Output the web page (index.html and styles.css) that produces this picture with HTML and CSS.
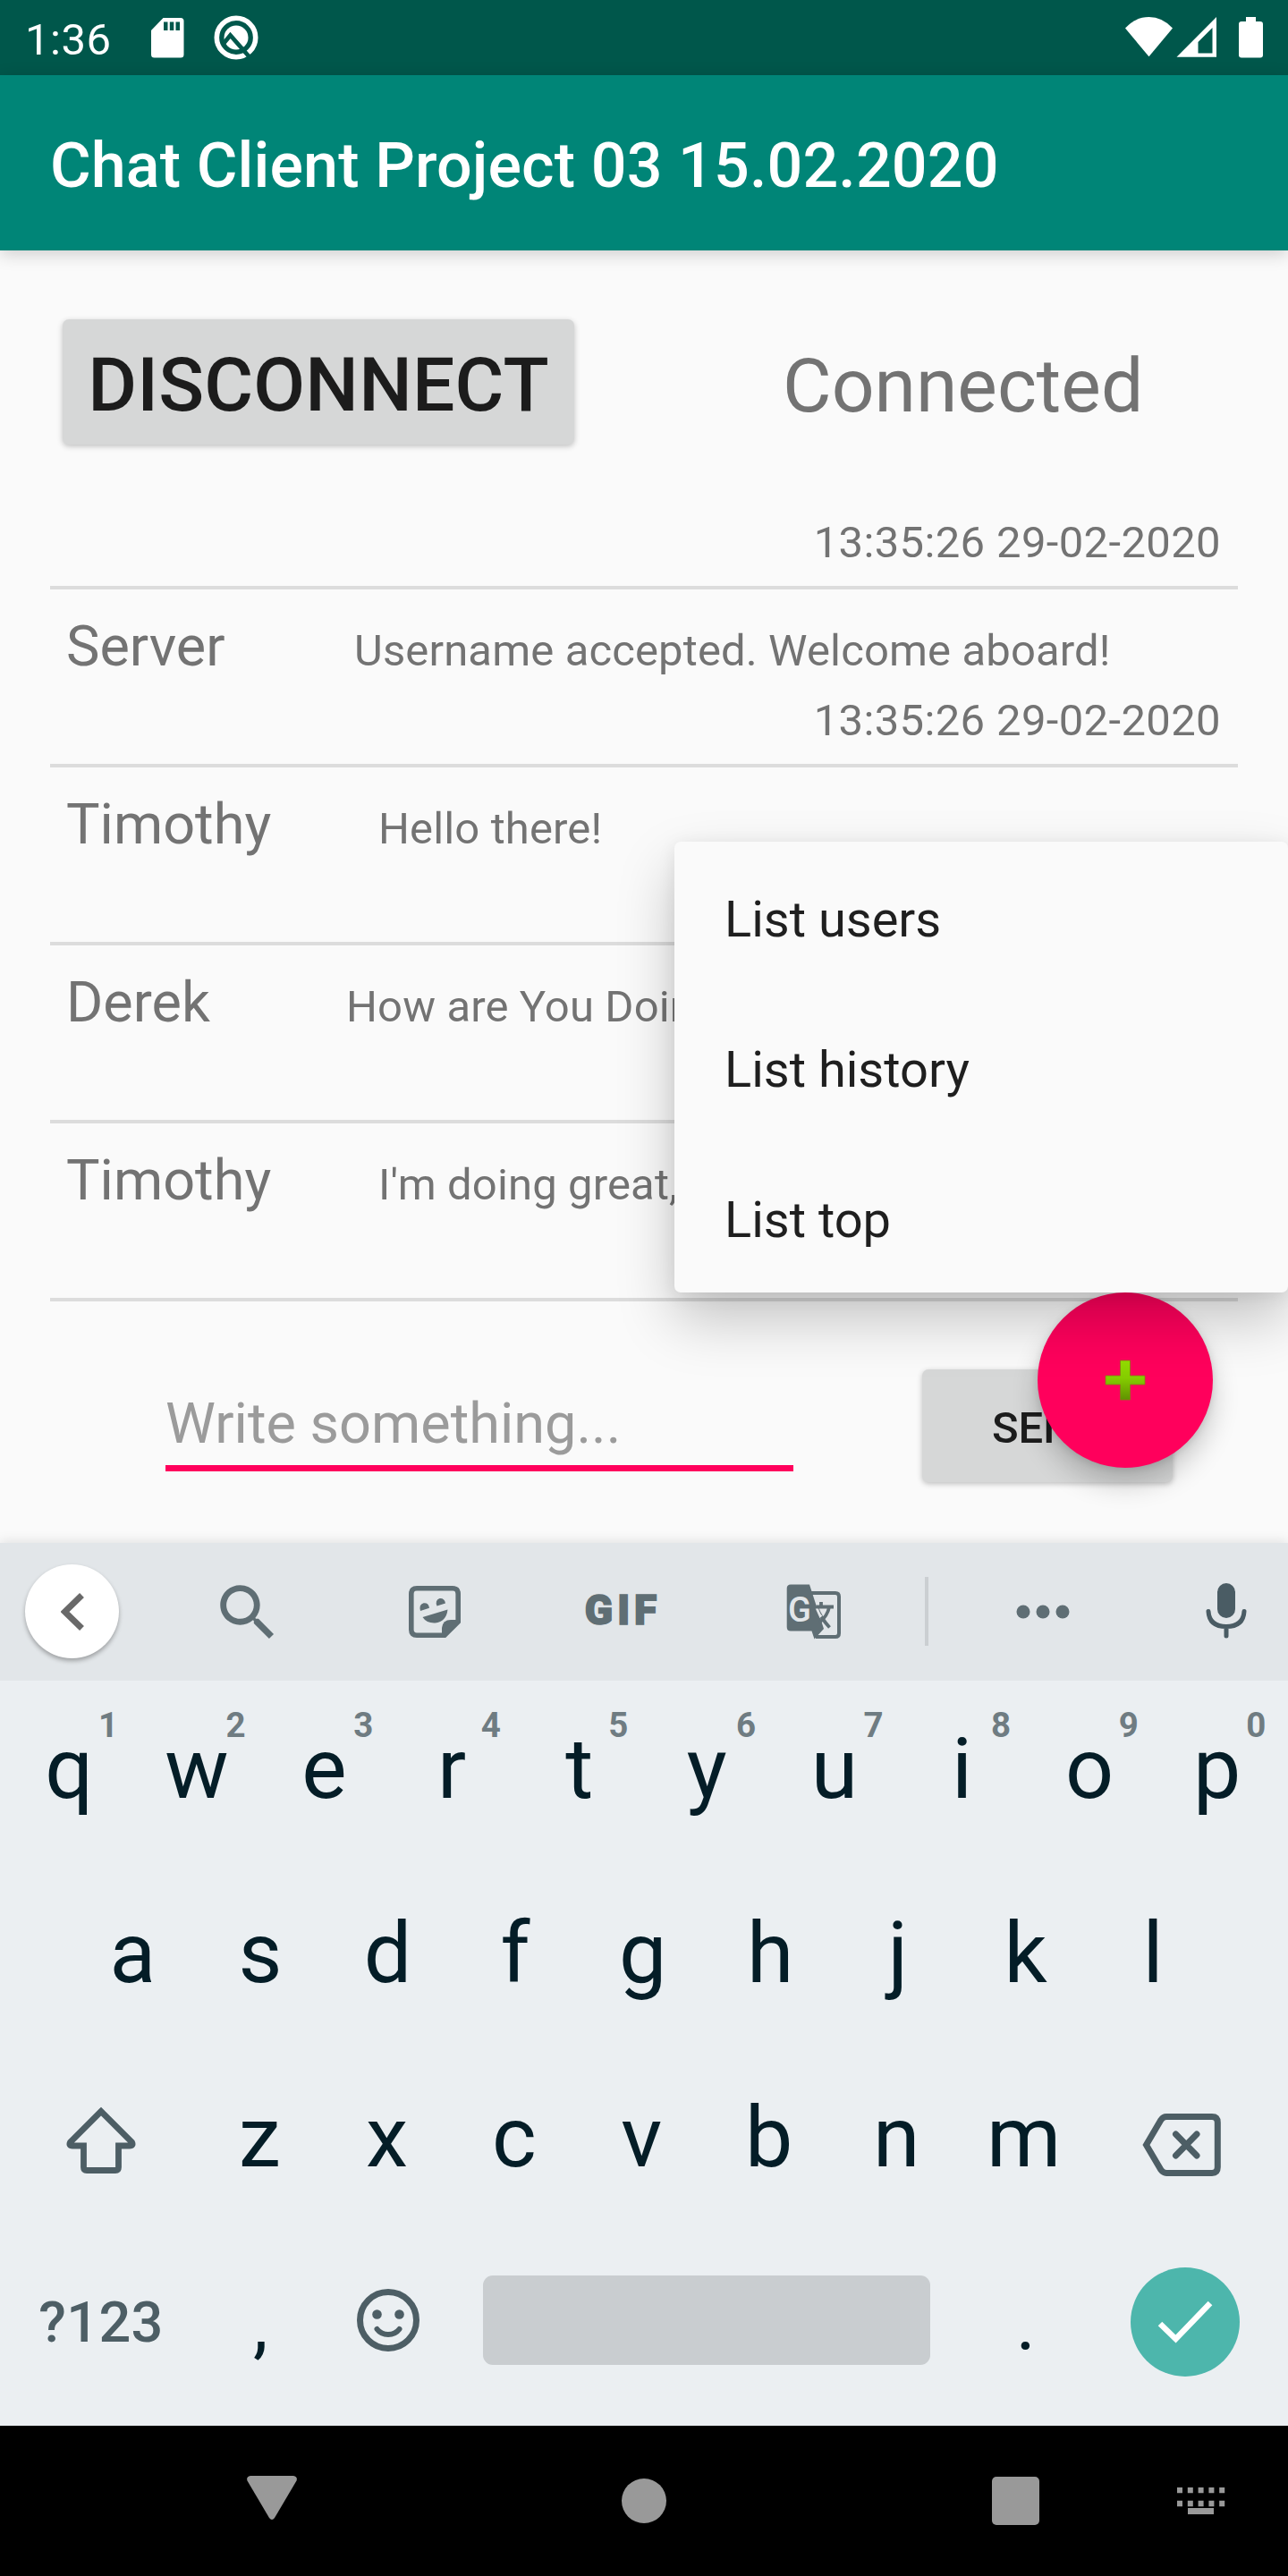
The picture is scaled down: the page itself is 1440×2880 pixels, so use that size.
FILE: index.html
```html
<!DOCTYPE html>
<html lang="en">
<head>
<meta charset="utf-8">
<title>Chat Client</title>
<link rel="stylesheet" href="styles.css">
</head>
<body>
<div class="screen">
  <div class="status">
    <span class="clock">1:36</span>
    <svg class="sd" width="37" height="45" viewBox="0 0 37 45"><path fill="#fff" fill-rule="evenodd" d="M13.500 0H33Q36.500 0 36.500 3.500V41Q36.500 44.500 33 44.500H3.500Q0 44.500 0 41V14ZM14 4.500V14H18.500V4.500ZM20.800 4.500V14H25.300V4.500ZM27.500 4.500V14H32V4.500Z"/></svg>
    <svg class="q" width="50" height="50" viewBox="0 0 50 50"><circle cx="25" cy="25" r="21.700" fill="none" stroke="#fff" stroke-width="5.600"/><circle cx="25" cy="25" r="13.500" fill="#fff"/><path d="M9.500 33.500L18.500 22.500L41 48" fill="none" stroke="#00574b" stroke-width="4.800"/></svg>
    <span class="grow"></span>
    <svg width="154" height="46" viewBox="0 0 154 46"><path fill="#fff" d="M0 12.500Q11.500 0 26.500 0T53 12.500L26.500 44.300Z"/><path fill="#fff" fill-rule="evenodd" d="M57.500 44.700L102 0V44.700ZM81.500 28V40.500H97.500V12Z"/><path fill="#fff" d="M135 0H146V5H151Q154 5 154 8V42.500Q154 45.500 151 45.500H130Q127 45.500 127 42.500V8Q127 5 130 5H135Z"/></svg>
  </div>
  <header class="appbar">Chat Client Project 03 15.02.2020</header>
  <main class="chat">
    <div class="connection">
      <button class="btn btn-connect">DISCONNECT</button>
      <span class="state">Connected</span>
    </div>
    <div class="messages">
      <div class="row row-first"><div class="time">13:35:26 29-02-2020</div></div>
      <div class="row"><div class="line"><span class="name">Server</span><span class="text from-server">Username accepted. Welcome aboard!</span></div><div class="time">13:35:26 29-02-2020</div></div>
      <div class="row"><div class="line"><span class="name">Timothy</span><span class="text from-timothy">Hello there!</span></div></div>
      <div class="row"><div class="line"><span class="name">Derek</span><span class="text from-derek">How are You Doing?</span></div></div>
      <div class="row"><div class="line"><span class="name">Timothy</span><span class="text from-timothy">I'm doing great, </span></div></div>
    </div>
    <div class="compose">
      <div class="field">Write something...</div>
      <button class="btn btn-send">SEND</button>
    </div>
    <div class="fab"><svg width="46" height="46" viewBox="0 0 46 46"><defs><linearGradient id="g" x1="0" y1="0" x2="0" y2="1"><stop offset="0" stop-color="#94de00"/><stop offset=".45" stop-color="#85cc00"/><stop offset="1" stop-color="#609200"/></linearGradient></defs><path fill="url(#g)" stroke="#8b7a18" stroke-width=".8" d="M17.500 1H28.500V18H45V28H28.500V45H17.500V28H1V18H17.500Z"/></svg></div>
    <div class="menu"><div>List users</div><div>List history</div><div>List top</div></div>
  </main>
  <section class="keyboard">
    <div class="tools">
      <span class="tool"><span class="back"><svg width="26" height="42" viewBox="0 0 26 42"><path d="M23.500 2.500L4.500 21L23.500 39.500" fill="none" stroke="#696969" stroke-width="7"/></svg></span></span>
      <span class="tool"><svg class="search" width="82" height="82" viewBox="0 0 24 24"><path fill="#5f6e74" d="M15.500 14h-.79l-.28-.27C15.410 12.590 16 11.110 16 9.500 16 5.910 13.090 3 9.500 3S3 5.910 3 9.500 5.910 16 9.500 16c1.610 0 3.090-.59 4.230-1.570l.27.28v.79l5 4.990L20.490 19l-4.990-5zm-6 0C7.010 14 5 11.990 5 9.500S7.010 5 9.500 5 14 7.010 14 9.500 11.990 14 9.500 14z"/></svg></span>
      <span class="tool"><svg width="58" height="58" viewBox="0 0 58 58" fill="#5f6e74"><path d="M9 2.800H49Q55.200 2.800 55.200 9V40L40 55.200H9Q2.800 55.200 2.800 49V9Q2.800 2.800 9 2.800Z" fill="none" stroke="#5f6e74" stroke-width="5.600"/><path d="M58 38V40L40.500 58H37V47Q38 38 47 38Z"/><path d="M15.500 35L43.500 26.500Q42 40 29.500 41.500Q20 42 15.500 35ZM13 28Q11 21 16.500 19.300Q22 18.500 23 24.700ZM31.500 22.500Q29 16 34.500 14Q40 13.500 41 19.500Z"/></svg></span>
      <span class="tool gif">GIF</span>
      <span class="tool"><svg width="62" height="62" viewBox="0 0 62 62"><path d="M27 10H55Q59 10 59 14V55Q59 59 55 59H33" fill="none" stroke="#5f6e74" stroke-width="4"/><path fill="#5f6e74" d="M5 .5H26L42 50L31.500 61.500L28.500 52.500H5Q.7 52.500 .7 48V5Q.7 .5 5 .5Z"/><path d="M33.500 25.500H53M39 20V26M48 26Q46 36 37 43M34.500 27Q38 37 48.500 48.500" fill="none" stroke="#5f6e74" stroke-width="3.800"/><path d="M32.800 27.500H36Q38 34 40.500 35.500L37.500 38Z" fill="#e2e6e9"/><text x="2" y="42" class="glyph">G</text></svg></span>
      <span class="tool"><i class="rule"></i></span>
      <span class="tool"><svg width="60" height="16" viewBox="0 0 60 16" fill="#5f6e74"><circle cx="8" cy="8" r="7.500"/><circle cx="30" cy="8" r="7.500"/><circle cx="52" cy="8" r="7.500"/></svg></span>
      <span class="tool"><svg class="mic" width="46" height="63" viewBox="0 0 46 63"><rect x="13" y="0" width="20" height="39" rx="10" fill="#4a5c64"/><path d="M3 31.500Q4 48.500 23 48.500T43 31.500M23 48.500V59" fill="none" stroke="#4a5c64" stroke-width="5" stroke-linecap="round"/></svg></span>
    </div>
    <div class="keys">
      <div class="krow ten">
        <div class="key">q<sup>1</sup></div><div class="key">w<sup>2</sup></div><div class="key">e<sup>3</sup></div><div class="key">r<sup>4</sup></div><div class="key">t<sup>5</sup></div><div class="key">y<sup>6</sup></div><div class="key">u<sup>7</sup></div><div class="key">i<sup>8</sup></div><div class="key">o<sup>9</sup></div><div class="key">p<sup>0</sup></div>
      </div>
      <div class="krow nine">
        <div class="key">a</div><div class="key">s</div><div class="key">d</div><div class="key">f</div><div class="key">g</div><div class="key">h</div><div class="key">j</div><div class="key">k</div><div class="key">l</div>
      </div>
      <div class="krow seven">
        <div class="key"><svg class="shift" width="80" height="76" viewBox="0 0 80 76"><path d="M40 5.500L5.500 40Q3.500 44 8 44H20.500V68Q20.500 71.500 24 71.500H56Q59.500 71.500 59.500 68V44H72Q76.500 44 74.500 40Z" fill="none" stroke="#4d5e65" stroke-width="6.800"/></svg></div>
        <div class="key">z</div><div class="key">x</div><div class="key">c</div><div class="key">v</div><div class="key">b</div><div class="key">n</div><div class="key">m</div>
        <div class="key"><svg class="erase" width="88" height="70" viewBox="0 0 88 70"><path d="M4.500 35L21 7Q23.500 3.600 27 3.600H78Q84.300 3.600 84.300 10V60Q84.300 66.400 78 66.400H27Q23.500 66.400 21 63Z" fill="none" stroke="#4d5e65" stroke-width="7"/><path d="M37.500 23L61 47M61 23L37.500 47" fill="none" stroke="#4d5e65" stroke-width="7" stroke-linecap="round"/></svg></div>
      </div>
      <div class="krow bottom">
        <div class="key mode">?123</div>
        <div class="key punct">,</div>
        <div class="key"><svg class="smile" width="70" height="70" viewBox="0 0 70 70"><circle cx="35" cy="35" r="31.500" fill="none" stroke="#4d5e65" stroke-width="7"/><circle cx="22.500" cy="28.500" r="5.300" fill="#4d5e65"/><circle cx="47.500" cy="28.500" r="5.300" fill="#4d5e65"/><path d="M22.500 45Q27 51 35 51T47.500 45" fill="none" stroke="#4d5e65" stroke-width="6" stroke-linecap="round"/></svg></div>
        <div class="space"></div>
        <div class="key punct">.</div>
        <div class="key"><span class="enter"><svg width="64" height="50" viewBox="0 0 64 50"><path d="M4 27L21.500 44L60 4" fill="none" stroke="#fff" stroke-width="6.500"/></svg></span></div>
      </div>
    </div>
  </section>
  <nav class="nav">
    <svg class="nav-back" width="56" height="50" viewBox="0 0 56 50"><path fill="#999" d="M4 0H52Q57 1 55.500 5.500L31 47Q28 51 25 47L.5 5.500Q-1 1 4 0Z"/></svg>
    <i class="home"></i>
    <i class="recent"></i>
    <svg class="nav-kb" width="54" height="30" viewBox="0 0 54 30"><path d="M0 3H54M0 18H54" stroke="#999" stroke-width="6.500" stroke-dasharray="6 5.800" fill="none"/><path d="M12 26.500H41" stroke="#999" stroke-width="7"/></svg>
  </nav>
</div>
</body>
</html>
```
FILE: styles.css
```css
* { box-sizing: border-box; }
body { margin: 0; font-family: Roboto, sans-serif; background: #fafafa; }
svg { display: block; flex: none; }
.screen { width: 1440px; height: 2880px; display: flex; flex-direction: column; overflow: hidden; }

.status { height: 84px; flex: none; background: #00574b; display: flex; align-items: flex-start; padding: 19px 28px 0 28px; color: #fff; }
.clock { font-size: 49px; line-height: 51px; letter-spacing: .5px; width: 141px; }
.sd { margin-top: 1px; }
.q { margin: -2px 0 0 33px; }
.grow { flex: 1; }

.appbar { height: 196px; flex: none; background: #008577; color: #fff; font-size: 70px; font-weight: 500; line-height: 190px; letter-spacing: .13px; padding: 6px 0 0 56px; box-shadow: 0 4px 18px rgba(0, 0, 0, .18); position: relative; z-index: 1; }

.chat { height: 1445px; flex: none; position: relative; padding: 77px 56px 0; background: #fafafa; color: #737373; }
.connection { display: flex; height: 140px; padding-left: 14px; }
.btn { border: 0; padding: 0; margin: 0; font-family: inherit; font-weight: 500; color: #1c1c1c; background: #d6d7d7; border-radius: 7px; box-shadow: 0 2px 6px rgba(0, 0, 0, .24); }
.btn-connect { width: 572px; height: 140px; font-size: 84px; line-height: 132px; letter-spacing: .2px; padding-top: 8px; }
.state { font-size: 84px; line-height: 132px; padding-top: 9px; margin-left: 233px; }

.messages { margin-top: 80px; }
.row { height: 199px; border-bottom: 4px solid #dcdcdc; padding: 17px 19px 0 18px; }
.row-first { height: 82px; padding-top: 0; }
.line { display: flex; align-items: baseline; height: 93px; line-height: 93px; white-space: nowrap; }
.name { font-size: 63px; width: 312px; }
.text { font-size: 49px; letter-spacing: .13px; }
.from-server { margin-left: 10px; }
.from-timothy { margin-left: 37px; }
.from-derek { margin-left: 1px; }
.time { font-size: 49px; line-height: 57px; letter-spacing: .36px; text-align: right; margin-top: 8px; }
.row-first .time { margin-top: 0; padding-top: 1px; }

.compose { display: flex; align-items: flex-start; margin: 70px 0 0 129px; }
.field { width: 702px; height: 120px; border-bottom: 7px solid #ff005c; padding-top: 20px; font-size: 63px; line-height: 93px; color: #9b9b9b; }
.btn-send { width: 280px; height: 126px; margin: 6px 0 0 144px; font-size: 49px; line-height: 120px; padding-top: 5px; }

.fab { position: absolute; left: 1160px; top: 1165px; width: 196px; height: 196px; border-radius: 50%; background: #ff005c; display: flex; align-items: center; justify-content: center; box-shadow: 0 18px 30px rgba(0, 0, 0, .2), 0 2px 8px rgba(0, 0, 0, .12); }
.menu { position: absolute; left: 754px; top: 661px; width: 686px; height: 504px; border-radius: 7px; background: #fafafa; color: #1f1f1f; font-size: 56px; line-height: 162px; box-shadow: 0 30px 64px rgba(0, 0, 0, .22), 0 4px 20px rgba(0, 0, 0, .08); }
.menu div { height: 168px; padding: 6px 0 0 56px; }

.keyboard { height: 987px; flex: none; background: #ebeff2; position: relative; box-shadow: 0 -2px 12px rgba(0, 0, 0, .1); }
.tools { height: 154px; background: #e2e6e9; display: grid; grid-template-columns: 161px 230px 189px 229px 201px 52px 207px 171px; }
.tool { display: flex; align-items: center; justify-content: center; padding-bottom: 1px; }
.back { width: 105px; height: 105px; border-radius: 50%; background: #fff; display: flex; align-items: center; justify-content: center; box-shadow: 0 3px 5px rgba(0, 0, 0, .3); }
.search { margin: 2px 0 0 2px; }
.gif { font-size: 46px; font-weight: 900; letter-spacing: 5px; color: #5f6e74; -webkit-text-stroke: 1.6px #5f6e74; padding: 0 0 4px 4px; }
.glyph { font-family: Roboto, sans-serif; font-size: 38px; font-weight: 500; fill: #e2e6e9; }
.rule { width: 4px; height: 77px; background: #cbcfd2; }
.mic { margin-left: 33px; }

.keys { padding-top: 6px; }
.krow { display: grid; height: 206px; align-items: start; }
.ten { grid-template-columns: repeat(10, 142.6px); padding-left: 6px; }
.nine { grid-template-columns: repeat(9, 142.6px); padding-left: 77px; }
.seven { grid-template-columns: 214px repeat(7, 142.4px) 214px; padding-left: 5px; }
.bottom { grid-template-columns: 214px 142.6px 142.6px 570.4px 142.6px 214px; padding-left: 6px; }
.key { display: grid; justify-items: center; align-items: start; font-size: 95px; line-height: 186px; color: #041d27; position: relative; }
.key sup { position: absolute; left: 86px; top: 14px; width: 58px; text-align: center; font-size: 38.5px; line-height: 60px; font-weight: 700; color: #6f7c82; }
.shift { margin: 58px 0 0 1px; }
.erase { margin: 66px 4px 0 0; }
.smile { margin-top: 56px; }
.mode { font-size: 63px; font-weight: 500; line-height: 187px; letter-spacing: .3px; color: #4d5e65; }
.punct { font-size: 84px; line-height: 191px; }
.space { width: 500px; height: 100px; margin-top: 41px; justify-self: center; border-radius: 11px; background: #c9cdd0; }
.enter { width: 122px; height: 122px; margin-top: 32px; border-radius: 50%; background: #4db6ac; display: flex; align-items: center; justify-content: center; }

.nav { height: 168px; flex: none; background: #000; display: flex; align-items: flex-start; padding: 56px 0 0 276px; position: relative; }
.home { width: 50px; height: 50px; border-radius: 50%; background: #999; margin: 3px 0 0 363px; }
.recent { width: 53px; height: 54px; border-radius: 5px; background: #999; margin: 1px 0 0 364px; }
.nav-kb { margin: 13px 0 0 154px; }
```
